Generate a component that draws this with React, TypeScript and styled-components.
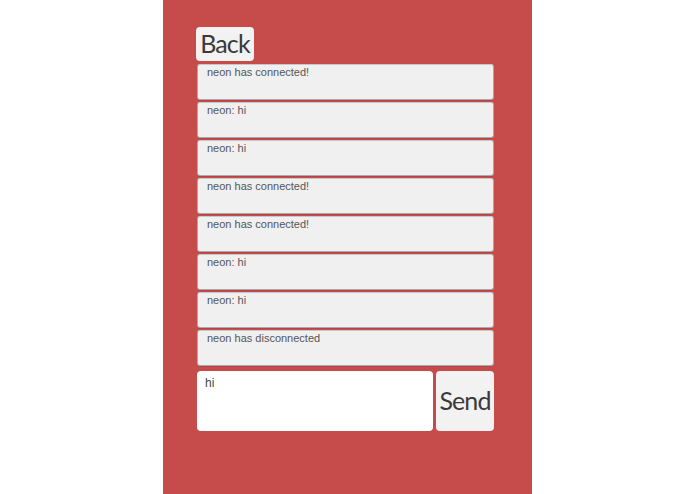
import React, { useState } from "react";
import styled, { createGlobalStyle } from "styled-components";

const GlobalStyle = createGlobalStyle`
  html, body {
    margin: 0;
    padding: 0;
    height: 100%;
    background: #ffffff;
  }
  #root {
    height: 100%;
  }
`;

const Page = styled.div`
  height: 494px;
  display: flex;
  justify-content: flex-start;
  padding-left: 163px;
  box-sizing: border-box;
`;

const Panel = styled.div`
  width: 369px;
  height: 100%;
  background: #c64c4c;
  padding: 27px 38px 0 34px;
  box-sizing: border-box;
  display: flex;
  flex-direction: column;
`;

const BigButton = styled.button<{ $tall?: boolean }>`
  font-family: Lato, "Open Sans", sans-serif;
  font-size: 25px;
  letter-spacing: -0.9px;
  color: #3a3a3a;
  background: #f2f2f2;
  border: none;
  border-radius: 4px;
  padding: 0 0 2px;
  width: 58px;
  height: ${(p) => (p.$tall ? "60px" : "34px")};
  line-height: 1;
  cursor: pointer;
  flex-shrink: 0;
`;

const BackRow = styled.div`
  display: flex;
  margin-left: -1px;
  margin-bottom: 3px;
`;

const MessageList = styled.div`
  display: flex;
  flex-direction: column;
  gap: 2px;
`;

const Message = styled.div`
  height: 36px;
  box-sizing: border-box;
  background: #f0f0f0;
  border: 1px solid #a9a9a9;
  border-top-color: #c8c8c8;
  border-radius: 3px;
  padding: 1px 9px;
  font-family: "Liberation Sans", Arial, sans-serif;
  font-size: 11px;
  color: #555555;
  box-shadow: 0 1px 0 rgba(0, 0, 0, 0.08);
`;

const Composer = styled.div`
  display: flex;
  gap: 3px;
  margin-top: 5px;
`;

const Input = styled.textarea`
  flex: 1;
  height: 60px;
  box-sizing: border-box;
  background: #ffffff;
  border: none;
  border-radius: 4px;
  padding: 5px 8px;
  resize: none;
  font-family: "Liberation Sans", Arial, sans-serif;
  font-size: 12px;
  color: #444444;
  outline: none;
`;

const messages = [
  "neon has connected!",
  "neon: hi",
  "neon: hi",
  "neon has connected!",
  "neon has connected!",
  "neon: hi",
  "neon: hi",
  "neon has disconnected",
];

export default function App() {
  const [text, setText] = useState("hi");

  return (
    <>
      <GlobalStyle />
      <Page>
        <Panel>
          <BackRow>
            <BigButton>Back</BigButton>
          </BackRow>
          <MessageList>
            {messages.map((m, i) => (
              <Message key={i}>{m}</Message>
            ))}
          </MessageList>
          <Composer>
            <Input value={text} onChange={(e) => setText(e.target.value)} />
            <BigButton $tall>Send</BigButton>
          </Composer>
        </Panel>
      </Page>
    </>
  );
}
